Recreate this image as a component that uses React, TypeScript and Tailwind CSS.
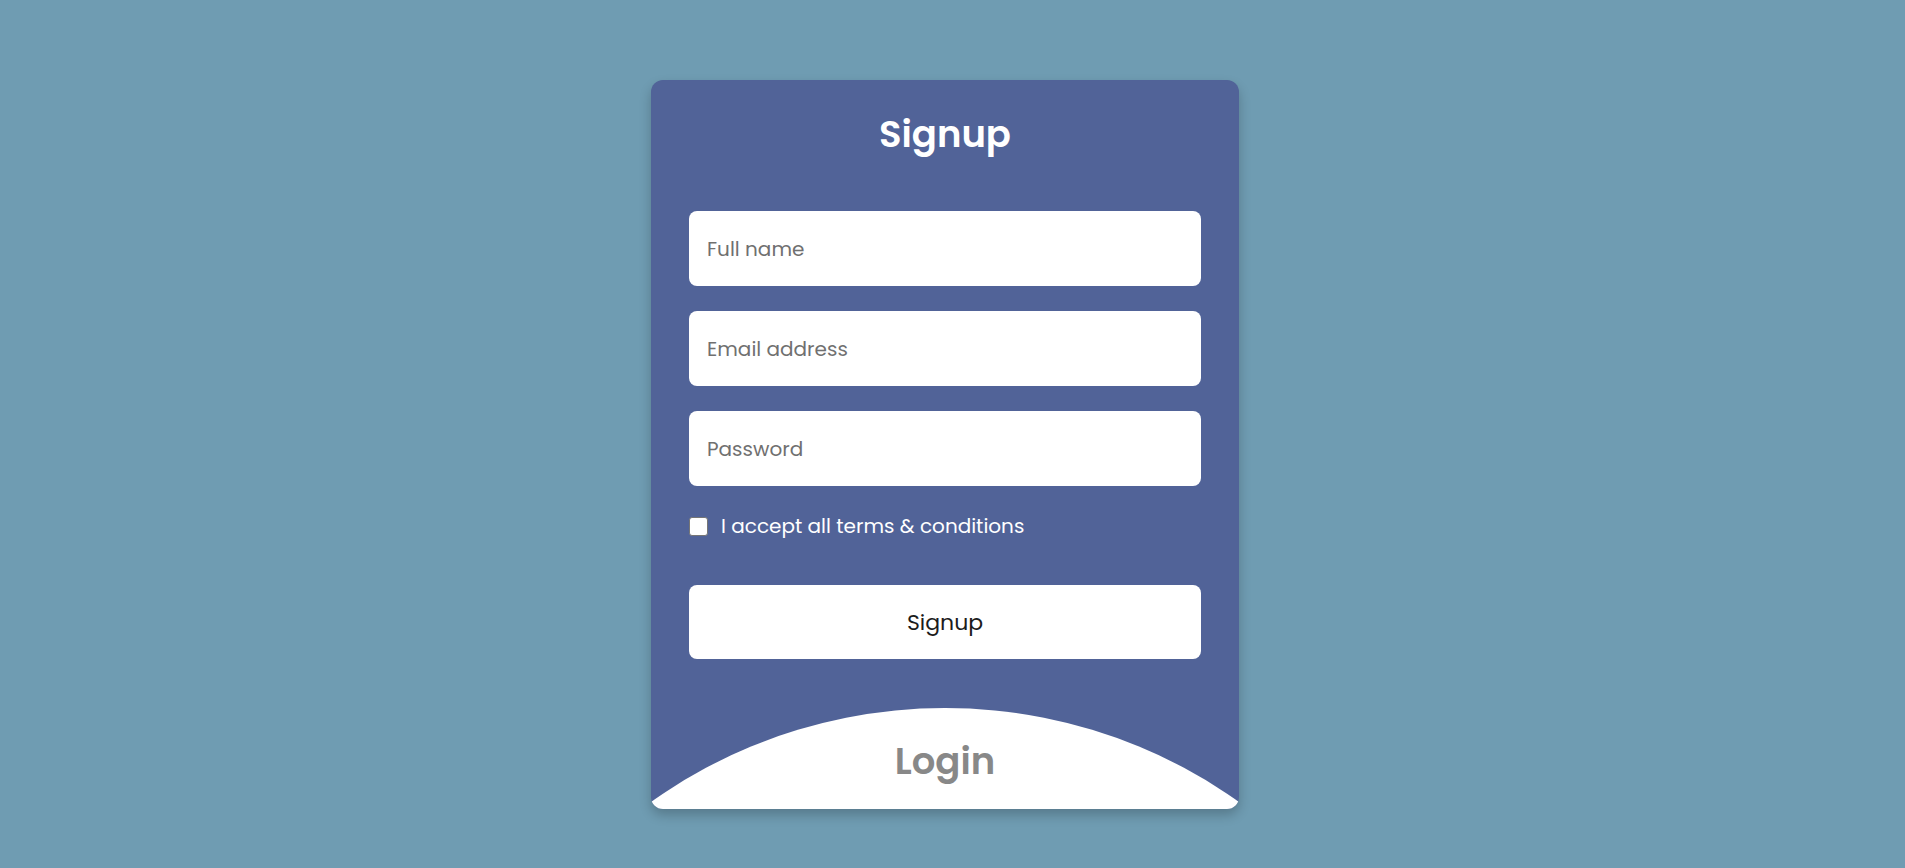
import { useState } from "react"

const fields = [
  { type: "text", placeholder: "Full name" },
  { type: "email", placeholder: "Email address" },
  { type: "password", placeholder: "Password" },
]

export default function App() {
  const [accepted, setAccepted] = useState(false)

  return (
    <div className="min-h-screen bg-[#6f9cb2] flex justify-center pt-[80px] pr-[15px] font-['Poppins','Inter',sans-serif]">
      <div className="relative w-[588px] h-[729px] bg-[#516398] rounded-[12px] overflow-hidden shadow-[0_6px_12px_rgba(0,0,0,0.22)] px-[38px] pt-[25px]">

        <h1 className="h-[60px] flex items-center justify-center text-white text-[37px] font-semibold">
          Signup
        </h1>

        <form className="mt-[46px] flex flex-col" onSubmit={(e) => e.preventDefault()}>
          <div className="flex flex-col gap-[25px]">
            {fields.map((f) => (
              <input
                key={f.placeholder}
                type={f.type}
                placeholder={f.placeholder}
                className="h-[75px] w-full bg-white rounded-[8px] pl-[18px] text-[20px] text-[#333] placeholder:text-[#707070] outline-none"
              />
            ))}
          </div>

          <label className="mt-[28px] h-[24px] flex items-center text-white text-[20px] cursor-pointer">
            <input
              type="checkbox"
              checked={accepted}
              onChange={() => setAccepted(!accepted)}
              className="appearance-none shrink-0 w-[19px] h-[19px] bg-white border border-[#767676] rounded-[3px] checked:bg-[#0075ff]"
            />
            <span className="ml-[13px]">I accept all terms &amp; conditions</span>
          </label>

          <button
            type="submit"
            className="mt-[47px] h-[74px] w-full bg-white rounded-[8px] text-[22px] font-normal text-[#1c1c1c]"
          >
            Signup
          </button>
        </form>

        <div className="absolute left-1/2 -translate-x-1/2 top-[628px] w-[1014px] h-[1014px] rounded-full bg-white flex justify-center pt-[35px]">
          <span className="text-[37px] leading-none font-semibold text-[#888888] h-fit">Login</span>
        </div>
      </div>
    </div>
  )
}
